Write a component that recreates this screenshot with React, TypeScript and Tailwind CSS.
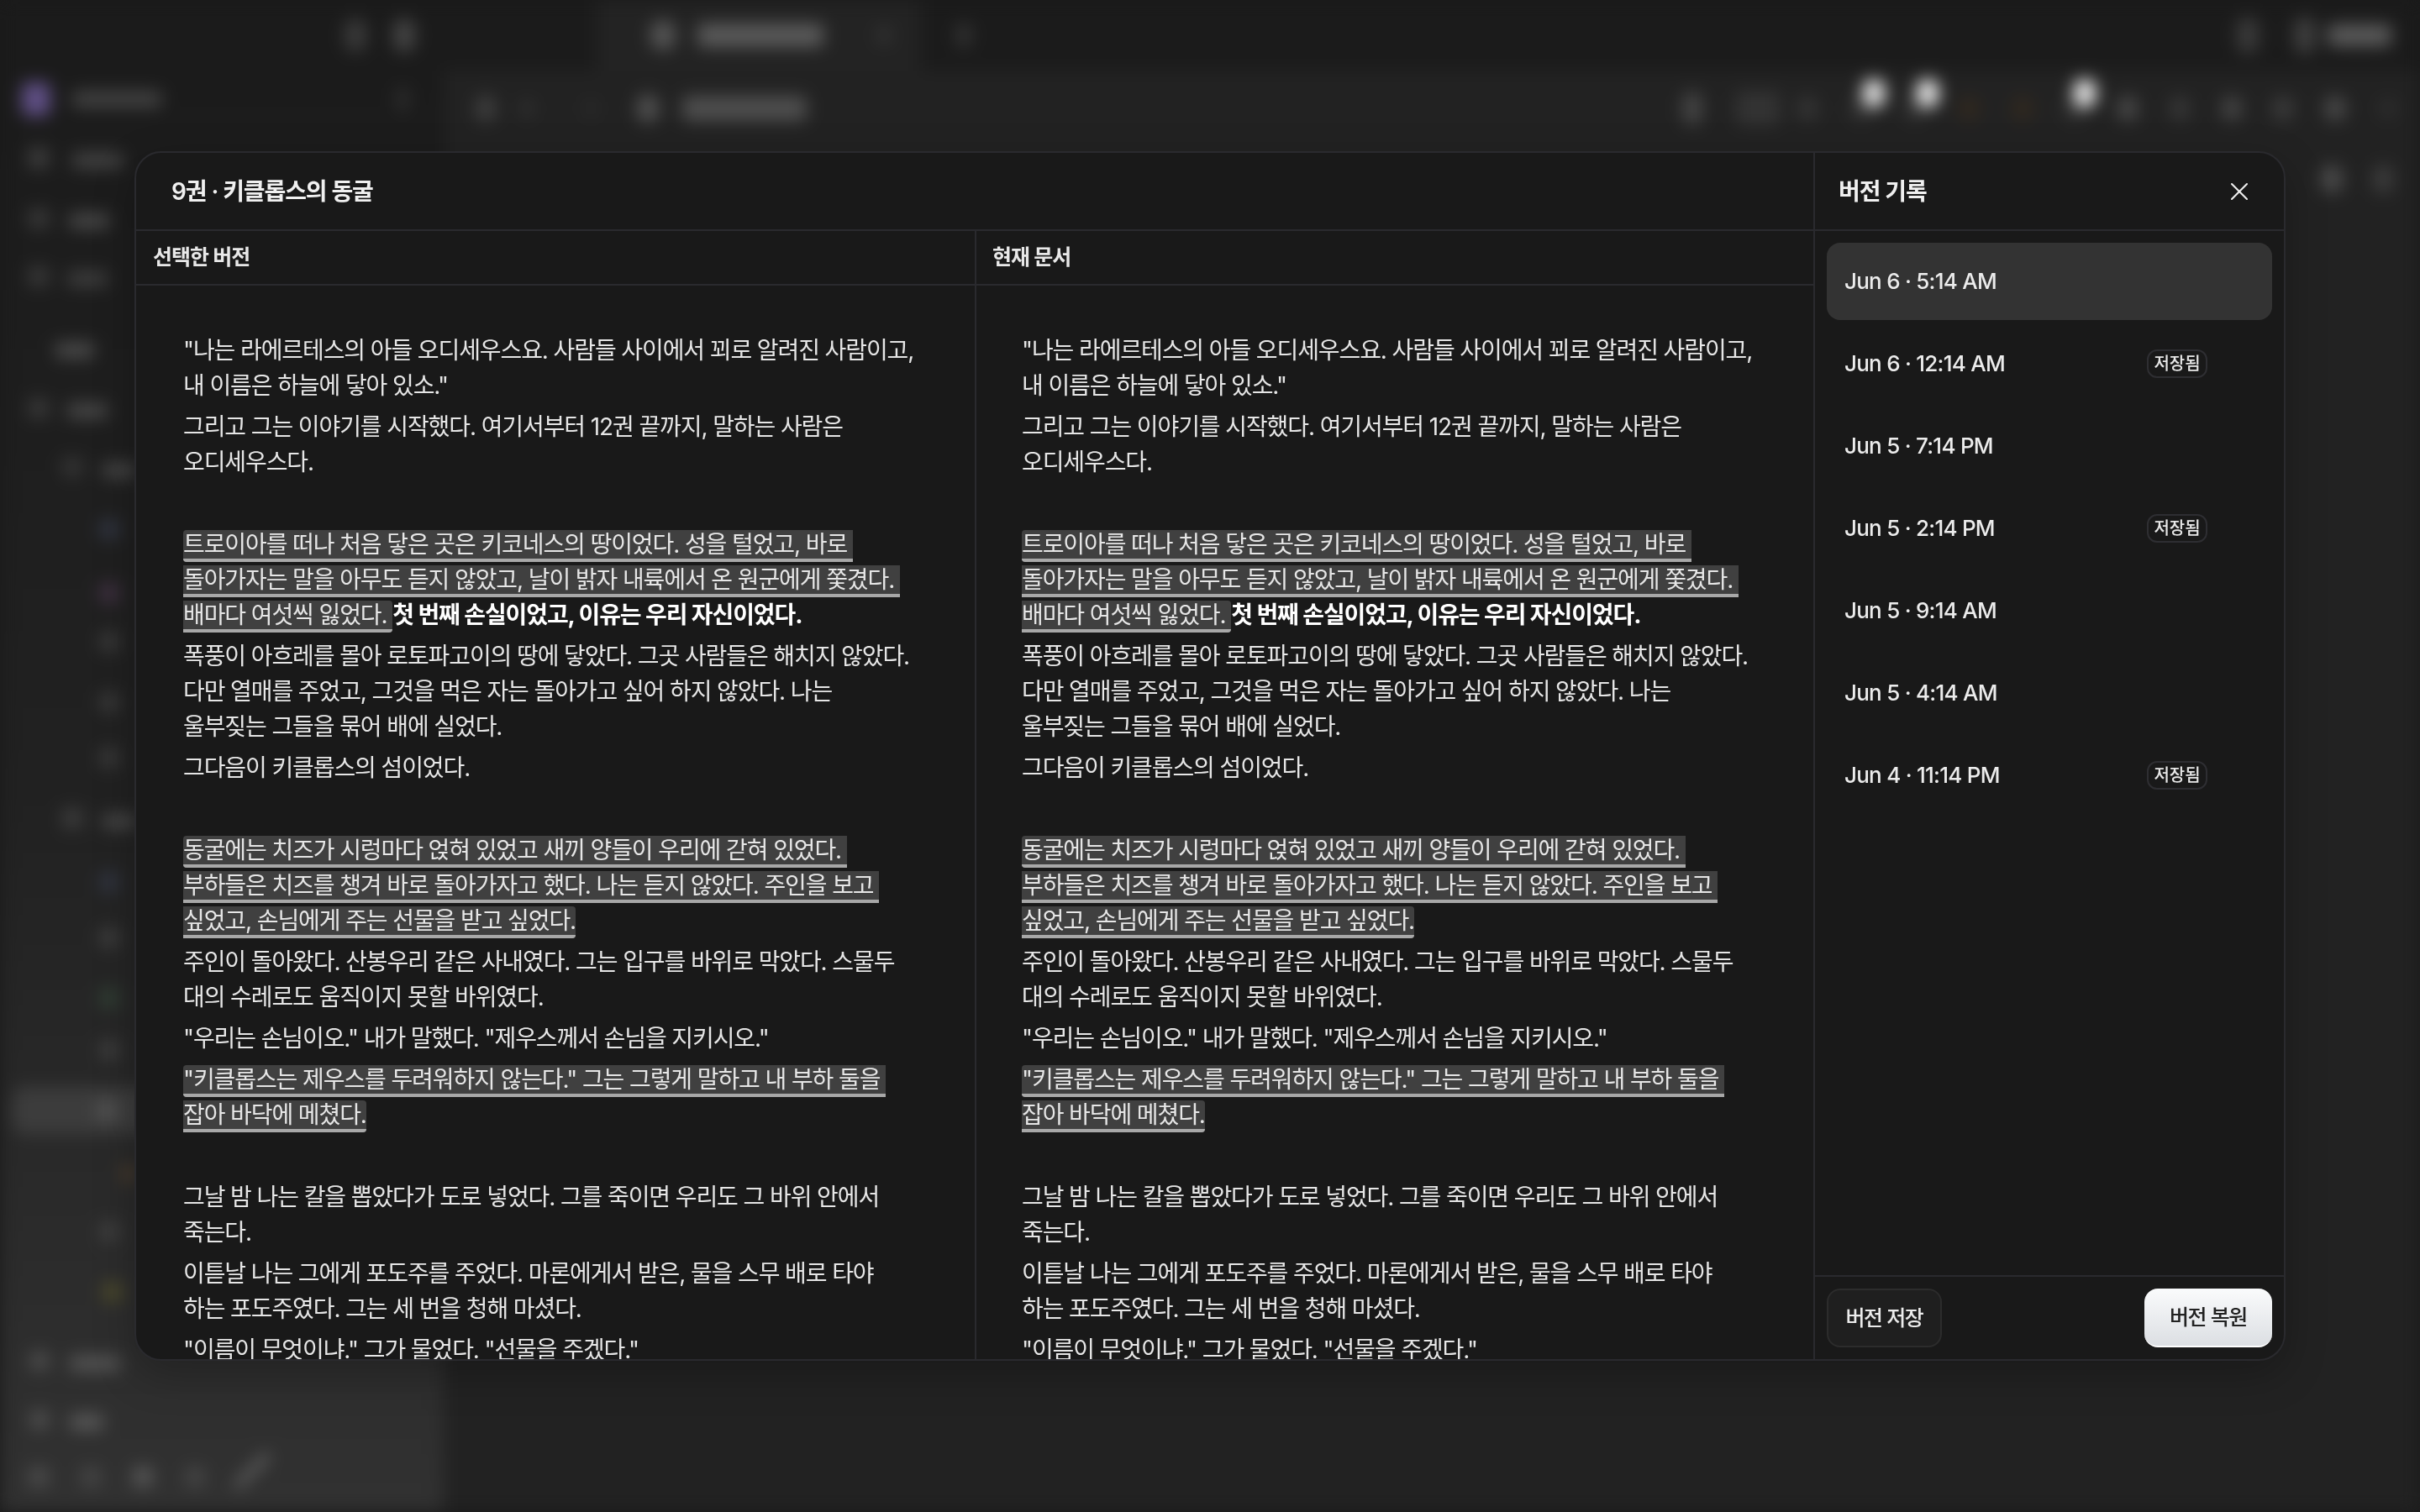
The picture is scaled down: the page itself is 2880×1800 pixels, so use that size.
import { X } from "lucide-react";

const FONT = "font-['Inter','Noto_Sans_CJK_KR',sans-serif]";

function Hl({ children }: { children: React.ReactNode }) {
  return <span className="bg-[#404040] border-b-4 border-[#a8a8a8] rounded-[4px]">{children}</span>;
}

function P({ children }: { children?: React.ReactNode }) {
  return <p className="mb-[7px]">{children}</p>;
}

function Gap() {
  return <div className="h-[49px]" />;
}

function Manuscript() {
  return (
    <div className="text-[28px] leading-[42px] tracking-[-1.1px] text-[#e6e6e6] whitespace-pre-wrap break-keep">
      <P>"나는 라에르테스의 아들 오디세우스요. 사람들 사이에서 꾀로 알려진 사람이고, 내 이름은 하늘에 닿아 있소."</P>
      <P>그리고 그는 이야기를 시작했다. 여기서부터 12권 끝까지, 말하는 사람은 오디세우스다.</P>
      <Gap />
      <P>
        <Hl>트로이아를 떠나 처음 닿은 곳은 키코네스의 땅이었다. 성을 털었고, 바로 돌아가자는 말을 아무도 듣지 않았고, 날이 밝자 내륙에서 온 원군에게 쫓겼다. 배마다 여섯씩 잃었다. </Hl>
        <strong className="font-bold text-white">첫 번째 손실이었고, 이유는 우리 자신이었다.</strong>
      </P>
      <P>폭풍이 아흐레를 몰아 로토파고이의 땅에 닿았다. 그곳 사람들은 해치지 않았다. 다만 열매를 주었고, 그것을 먹은 자는 돌아가고 싶어 하지 않았다. 나는 울부짖는 그들을 묶어 배에 실었다.</P>
      <P>그다음이 키클롭스의 섬이었다.</P>
      <Gap />
      <P>
        <Hl>동굴에는 치즈가 시렁마다 얹혀 있었고 새끼 양들이 우리에 갇혀 있었다. 부하들은 치즈를 챙겨 바로 돌아가자고 했다. 나는 듣지 않았다. 주인을 보고 싶었고, 손님에게 주는 선물을 받고 싶었다.</Hl>
      </P>
      <P>주인이 돌아왔다. 산봉우리 같은 사내였다. 그는 입구를 바위로 막았다. 스물두 대의 수레로도 움직이지 못할 바위였다.</P>
      <P>"우리는 손님이오." 내가 말했다. "제우스께서 손님을 지키시오."</P>
      <P>
        <Hl>"키클롭스는 제우스를 두려워하지 않는다." 그는 그렇게 말하고 내 부하 둘을 잡아 바닥에 메쳤다.</Hl>
      </P>
      <Gap />
      <P>그날 밤 나는 칼을 뽑았다가 도로 넣었다. 그를 죽이면 우리도 그 바위 안에서 죽는다.</P>
      <P>이튿날 나는 그에게 포도주를 주었다. 마론에게서 받은, 물을 스무 배로 타야 하는 포도주였다. 그는 세 번을 청해 마셨다.</P>
      <P>"이름이 무엇이냐." 그가 물었다. "선물을 주겠다."</P>
    </div>
  );
}

const versions = [
  { label: "Jun 6 · 5:14 AM", saved: false, active: true },
  { label: "Jun 6 · 12:14 AM", saved: true, active: false },
  { label: "Jun 5 · 7:14 PM", saved: false, active: false },
  { label: "Jun 5 · 2:14 PM", saved: true, active: false },
  { label: "Jun 5 · 9:14 AM", saved: false, active: false },
  { label: "Jun 5 · 4:14 AM", saved: false, active: false },
  { label: "Jun 4 · 11:14 PM", saved: true, active: false },
];

function HistoryPanel() {
  return (
    <aside className="w-[560px] shrink-0 border-l-2 border-[#2a2a2e] flex flex-col">
      <div className="h-[93px] shrink-0 border-b-2 border-[#2a2a2e] flex items-center justify-between pl-[28px] pr-[35px]">
        <h2 className="text-[28px] font-semibold tracking-[-1.1px] text-[#f0f0f0]">버전 기록</h2>
        <X size={36} strokeWidth={1.4} className="text-[#eeeeee]" />
      </div>
      <div className="flex-1 px-[14px] pt-[14px] flex flex-col gap-[6px]">
        {versions.map((v) => (
          <div
            key={v.label}
            className={
              v.active
                ? "h-[92px] rounded-[16px] bg-[#333333] flex items-center pl-[21px]"
                : "h-[92px] rounded-[16px] flex items-center pl-[21px]"
            }
          >
            <span className="w-[360px] text-[26px] font-medium tracking-[-0.75px] text-[#ececec] -mt-[2px]">{v.label}</span>
            {v.saved && (
              <span className="h-[34px] w-[72px] flex items-center justify-center rounded-[12px] border-2 border-[#2e2e32] text-[20px] font-medium text-[#e8e8e8]">
                저장됨
              </span>
            )}
          </div>
        ))}
      </div>
      <div className="h-[100px] shrink-0 border-t-2 border-[#2a2a2e] flex items-center justify-between px-[14px]">
        <button className="h-[70px] w-[137px] rounded-[16px] border-2 border-[#2c2c2c] bg-[#1f1f1f] text-[25px] tracking-[-1.3px] font-medium text-[#ececec] pt-[2px]">
          버전 저장
        </button>
        <button className="h-[70px] w-[152px] rounded-[16px] border-b-2 border-white bg-gradient-to-b from-[#fafbfc] to-[#dcdfe3] text-[25px] tracking-[-1.3px] font-medium text-[#222222] pt-[2px]">
          버전 복원
        </button>
      </div>
    </aside>
  );
}

function VersionDialog() {
  return (
    <div className="fixed inset-0 flex items-center justify-center">
      <div className="w-[2560px] h-[1440px] rounded-[32px] border-2 border-[#2a2a2e] bg-[#191919] shadow-[0_16px_48px_rgba(0,0,0,0.25)] flex overflow-hidden">
        <div className="flex-1 min-w-0 flex flex-col">
          <div className="h-[93px] shrink-0 border-b-2 border-[#2a2a2e] flex items-center pl-[42px]">
            <h1 className="text-[28px] font-semibold tracking-[-1.1px] text-[#f0f0f0]">9권 · 키클롭스의 동굴</h1>
          </div>
          <div className="flex-1 min-h-0 grid grid-cols-2">
            <section className="flex flex-col min-h-0 overflow-hidden">
              <div className="h-[65px] shrink-0 border-b-2 border-[#2a2a2e] flex items-center pl-[20px] text-[25px] tracking-[-1px] font-semibold text-[#e8e8e8]">
                선택한 버전
              </div>
              <div className="flex-1 min-h-0 overflow-hidden pl-[56px] pr-[70px] pt-[56px]">
                <Manuscript />
              </div>
            </section>
            <section className="flex flex-col min-h-0 overflow-hidden border-l-2 border-[#2a2a2e]">
              <div className="h-[65px] shrink-0 border-b-2 border-[#2a2a2e] flex items-center pl-[19px] text-[25px] tracking-[-1px] font-semibold text-[#e8e8e8]">
                현재 문서
              </div>
              <div className="flex-1 min-h-0 overflow-hidden pl-[54px] pr-[70px] pt-[56px]">
                <Manuscript />
              </div>
            </section>
          </div>
        </div>
        <HistoryPanel />
      </div>
    </div>
  );
}

function Nav({ className }: { className: string }) {
  return <div className={className} />;
}

// the app behind the dialog, only ever seen blurred
function BlurredShell() {
  return (
    <div className="h-[1800px] w-[2880px] flex flex-col bg-[#1b1b1b] blur-[10px]">
      <div className="h-[84px] shrink-0 flex items-center">
        <div className="w-[410px] shrink-0" />
        <div className="w-[26px] h-[40px] rounded-full bg-[#3a3a3a]" />
        <div className="w-[26px] h-[40px] rounded-full bg-[#444444] ml-[32px]" />
        <div className="w-[216px] shrink-0" />
        <div className="w-[386px] h-full bg-[#232323] flex items-center pl-[64px]">
          <div className="w-[30px] h-[36px] rounded-full bg-[#555555]" />
          <div className="w-[150px] h-[28px] rounded-md bg-[#5a5a5a] ml-[26px]" />
          <div className="w-[16px] h-[24px] rounded-full bg-[#3a3a3a] ml-[64px] opacity-70" />
        </div>
        <div className="w-[18px] h-[30px] rounded-full bg-[#333333] ml-[42px]" />
        <div className="flex-1" />
        <div className="w-[26px] h-[44px] rounded-full bg-[#3a3a3a] mr-[42px]" />
        <div className="w-[26px] h-[44px] rounded-full bg-[#3e3e3e] mr-[14px]" />
        <div className="w-[76px] h-[26px] rounded-md bg-[#5a5a5a] mr-[34px]" />
      </div>
      <div className="flex-1 min-h-0 flex">
        <nav className="w-[528px] shrink-0 bg-gradient-to-b from-[#1b1b1b] via-[#212121] to-[#313131] flex flex-col pt-[14px] relative">
          <div className="h-[40px] flex items-center pl-[26px]">
            <div className="w-[34px] h-[40px] rounded-lg bg-[#5f4f85]" />
            <div className="w-[106px] h-[20px] rounded bg-[#424242] ml-[26px]" />
            <div className="w-[14px] h-[30px] rounded-full bg-[#2e2e2e] ml-[280px]" />
          </div>
          <div className="h-[62px] flex items-end pl-[34px]"><div className="w-[24px] h-[24px] rounded bg-[#3e3e3e]" /><div className="w-[60px] h-[18px] rounded bg-[#444444] ml-[28px] " /></div>
          <div className="h-[72px] flex items-end pl-[34px]"><div className="w-[24px] h-[24px] rounded bg-[#383838]" /><div className="w-[48px] h-[18px] rounded bg-[#484848] ml-[24px]" /></div>
          <div className="h-[69px] flex items-end pl-[34px]"><div className="w-[24px] h-[24px] rounded bg-[#383838]" /><div className="w-[48px] h-[18px] rounded bg-[#3e3e3e] ml-[22px]" /></div>
          <div className="h-[85px] flex items-end pl-[66px]"><div className="w-[46px] h-[18px] rounded bg-[#4c4c4c]" /></div>
          <div className="h-[72px] flex items-end pl-[34px]"><div className="w-[24px] h-[24px] rounded bg-[#383838]" /><div className="w-[48px] h-[18px] rounded bg-[#484848] ml-[22px]" /></div>
          <div className="h-[70px] flex items-end pl-[74px]"><div className="w-[24px] h-[24px] rounded bg-[#343434]" /><div className="w-[40px] h-[16px] rounded bg-[#4a4a4a] ml-[24px]" /></div>
          <div className="h-[74px] flex items-end pl-[118px]"><div className="w-[24px] h-[24px] rounded bg-[#30343f]" /></div>
          <div className="h-[76px] flex items-end pl-[118px]"><div className="w-[24px] h-[24px] rounded bg-[#3e3040]" /></div>
          <div className="h-[58px] flex items-end pl-[118px]"><div className="w-[24px] h-[24px] rounded bg-[#383838]" /></div>
          <div className="h-[72px] flex items-end pl-[118px]"><div className="w-[24px] h-[24px] rounded bg-[#383838]" /></div>
          <div className="h-[66px] flex items-end pl-[118px]"><div className="w-[24px] h-[24px] rounded bg-[#383838]" /></div>
          <div className="h-[72px] flex items-end pl-[74px]"><div className="w-[24px] h-[24px] rounded bg-[#3c3c3c]" /><div className="w-[40px] h-[16px] rounded bg-[#4a4a4a] ml-[24px]" /></div>
          <div className="h-[76px] flex items-end pl-[118px]"><div className="w-[24px] h-[24px] rounded bg-[#30343f]" /></div>
          <div className="h-[66px] flex items-end pl-[118px]"><div className="w-[24px] h-[24px] rounded bg-[#3c3c3c]" /></div>
          <div className="h-[72px] flex items-end pl-[118px]"><div className="w-[24px] h-[24px] rounded bg-[#303d33]" /></div>
          <div className="h-[62px] flex items-end pl-[118px]"><div className="w-[24px] h-[24px] rounded bg-[#3c3c3c]" /></div>
          <div className="mx-[15px] mt-[32px] h-[56px] rounded-[14px] bg-[#3c3c3c] flex items-center pl-[100px]">
            <div className="w-[24px] h-[24px] rounded bg-[#525252]" />
          </div>
          <div className="h-[58px] flex items-end pl-[145px]"><div className="w-[16px] h-[22px] rounded bg-[#4a3c2c]" /></div>
          <div className="h-[70px] flex items-end pl-[118px]"><div className="w-[24px] h-[24px] rounded bg-[#3e3e3e]" /></div>
          <div className="h-[72px] flex items-end pl-[122px]"><div className="w-[24px] h-[24px] rounded bg-[#4a482c]" /></div>
          <div className="h-[82px] flex items-end pl-[35px]"><div className="w-[24px] h-[24px] rounded-full bg-[#4e4e4e]" /><div className="w-[60px] h-[18px] rounded bg-[#555555] ml-[24px]" /></div>
          <div className="h-[70px] flex items-end pl-[35px]"><div className="w-[24px] h-[24px] rounded-full bg-[#505050]" /><div className="w-[40px] h-[18px] rounded bg-[#5a5a5a] ml-[24px]" /></div>
          <div className="h-[68px] flex items-end gap-[38px] pl-[34px]">
            <Nav className="w-[24px] h-[24px] rounded bg-[#4a4a4a]" />
            <Nav className="w-[24px] h-[24px] rounded bg-[#444444]" />
            <Nav className="w-[24px] h-[24px] rounded bg-[#555555]" />
            <Nav className="w-[24px] h-[24px] rounded bg-[#444444]" />
            <Nav className="w-[56px] h-[10px] rounded bg-[#5e5e5e] -rotate-45 mb-[14px] -ml-[10px]" />
          </div>
        </nav>
        <main className="flex-1 min-w-0 bg-[#222222] flex flex-col">
          <div className="h-[90px] shrink-0 flex items-center pl-[38px]">
            <div className="w-[24px] h-[32px] rounded-full bg-[#3e3e3e]" />
            <div className="w-[14px] h-[20px] rounded-full bg-[#333333] ml-[30px]" />
            <div className="w-[14px] h-[20px] rounded-full bg-[#2c2c2c] ml-[62px]" />
            <div className="w-[26px] h-[34px] rounded-full bg-[#505050] ml-[48px]" />
            <div className="w-[148px] h-[30px] rounded-md bg-[#4e4e4e] ml-[28px]" />
            <div className="flex-1" />
            <div className="w-[24px] h-[40px] rounded-full bg-[#444444]" />
            <div className="w-[52px] h-[40px] rounded-md bg-[#333333] ml-[40px]" />
            <div className="w-[26px] h-[30px] rounded-full bg-[#333333] ml-[20px]" />
            <div className="relative w-[26px] h-[30px] rounded-full bg-[#333333] ml-[38px]">
              <div className="absolute left-[15px] -top-[20px] w-[26px] h-[34px] rounded-full bg-[#e8e8e8]" />
            </div>
            <div className="relative w-[26px] h-[30px] rounded-full bg-[#333333] ml-[38px]">
              <div className="absolute left-[15px] -top-[20px] w-[26px] h-[34px] rounded-full bg-[#f0f0f0]" />
            </div>
            <div className="w-[26px] h-[30px] rounded-full bg-[#30281f] ml-[38px]" />
            <div className="w-[26px] h-[30px] rounded-full bg-[#30281f] ml-[38px]" />
            <div className="relative w-[26px] h-[30px] rounded-full bg-[#333333] ml-[36px]">
              <div className="absolute left-[12px] -top-[20px] w-[26px] h-[34px] rounded-full bg-[#f0f0f0]" />
            </div>
            <div className="w-[24px] h-[30px] rounded-full bg-[#484848] ml-[38px]" />
            <div className="w-[24px] h-[30px] rounded-full bg-[#363636] ml-[38px]" />
            <div className="w-[24px] h-[30px] rounded-full bg-[#444444] ml-[38px]" />
            <div className="w-[26px] h-[30px] rounded-full bg-[#3a3a3a] ml-[36px]" />
            <div className="w-[26px] h-[30px] rounded-full bg-[#484848] ml-[36px]" />
            <div className="w-[20px] h-[24px] rounded-full bg-[#2e2e2e] ml-[40px] mr-[28px]" />
          </div>
          <div className="flex justify-end pr-[32px] gap-[36px] pt-[22px]">
            <div className="w-[26px] h-[34px] rounded-full bg-[#4a4a4a]" />
            <div className="w-[24px] h-[34px] rounded-full bg-[#3c3c3c]" />
          </div>
        </main>
      </div>
    </div>
  );
}

export default function App() {
  return (
    <div className={`${FONT} relative h-[1800px] w-[2880px] overflow-hidden bg-[#1b1b1b]`}>
      <BlurredShell />
      <VersionDialog />
    </div>
  );
}
